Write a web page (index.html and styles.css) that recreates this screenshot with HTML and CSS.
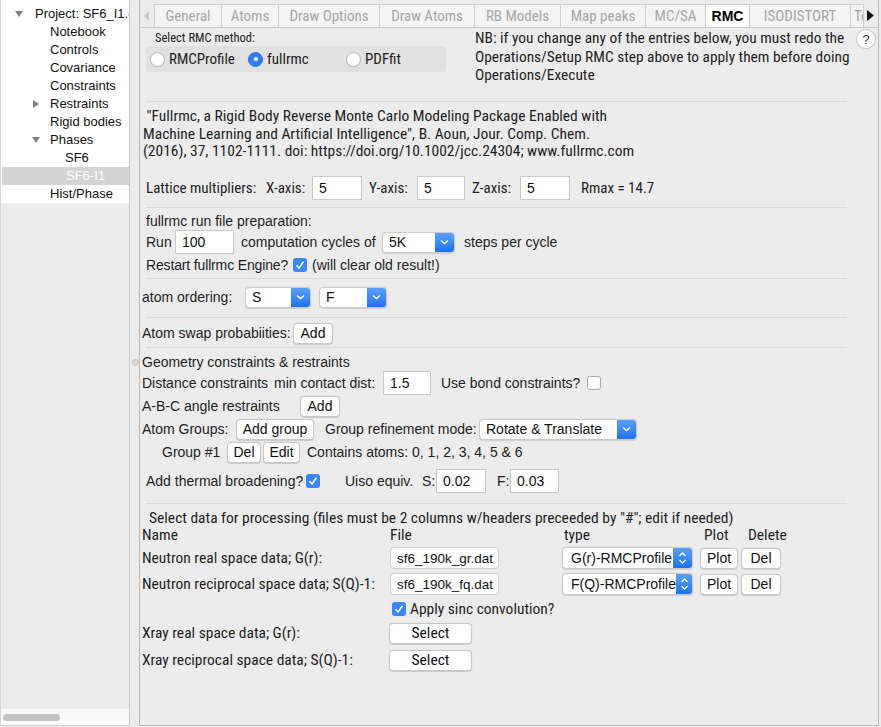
FILE: index.html
```html
<!DOCTYPE html>
<html>
<head>
<meta charset="utf-8">
<link rel="stylesheet" href="styles.css">
</head>
<body>
<div class="app">
  <div class="tree">
    <div class="rows">
      <div class="trow lvl0"><svg class="tri" width="10" height="10" viewBox="0 0 10 10"><path d="M1 2 H9 L5 8 Z" fill="#808080"/></svg>Project: SF6_I1.gpx</div>
      <div class="trow lvl1">Notebook</div>
      <div class="trow lvl1">Controls</div>
      <div class="trow lvl1">Covariance</div>
      <div class="trow lvl1">Constraints</div>
      <div class="trow lvl1b"><svg class="tri" width="10" height="10" viewBox="0 0 10 10"><path d="M2 1 V9 L8 5 Z" fill="#808080"/></svg>Restraints</div>
      <div class="trow lvl1">Rigid bodies</div>
      <div class="trow lvl1b"><svg class="tri" width="10" height="10" viewBox="0 0 10 10"><path d="M1 2 H9 L5 8 Z" fill="#808080"/></svg>Phases</div>
      <div class="trow lvl2">SF6</div>
      <div class="trow lvl2 sel">SF6-I1</div>
      <div class="trow lvl1">Hist/Phase</div>
    </div>
    <div class="filler"></div>
    <div class="hscroll"><div class="pill"></div></div>
  </div>

  <div class="main">
    <div class="tabbar">
      <div class="tabarrow left"><svg width="6" height="10" viewBox="0 0 6 10"><path d="M5 0 V10 L0 5 Z" fill="#c4c4c4"/></svg></div>
      <div class="tab w67">General</div>
      <div class="tab w57">Atoms</div>
      <div class="tab w101">Draw Options</div>
      <div class="tab w95">Draw Atoms</div>
      <div class="tab w86">RB Models</div>
      <div class="tab w85">Map peaks</div>
      <div class="tab w60">MC/SA</div>
      <div class="tab w44 active">RMC</div>
      <div class="tab w101">ISODISTORT</div>
      <div class="tab w14 part">Texture</div>
      <div class="tabarrow right"><svg width="7" height="11" viewBox="0 0 7 11"><path d="M0 0 V11 L7 5.5 Z" fill="#111"/></svg></div>
    </div>

    <div class="content">
      <div class="top">
        <div class="method">
          <div class="mlabel">Select RMC method:</div>
          <div class="radiobox">
            <div class="ritem r1"><span class="radio"></span>RMCProfile</div>
            <div class="ritem r2"><span class="radio on"></span>fullrmc</div>
            <div class="ritem"><span class="radio"></span>PDFfit</div>
          </div>
        </div>
        <div class="nb">NB: if you change any of the entries below, you must redo the<br>Operations/Setup RMC step above to apply them before doing<br>Operations/Execute</div>
        <div class="help">?</div>
      </div>

      <div class="sep s1"></div>

      <div class="cite narrow">&nbsp;"Fullrmc, a Rigid Body Reverse Monte Carlo Modeling Package Enabled with<br>Machine Learning and Artificial Intelligence", B. Aoun, Jour. Comp. Chem.<br>(2016), 37, 1102-1111. doi: https://doi.org/10.1002/jcc.24304; www.fullrmc.com</div>

      <div class="row lattice narrow">
        <span class="l-lat">Lattice multipliers:</span>
        <span class="l-x">X-axis:</span><span class="inp w50">5</span>
        <span class="l-y">Y-axis:</span><span class="inp w48">5</span>
        <span class="l-y">Z-axis:</span><span class="inp w50">5</span>
        <span class="rmax">Rmax = 14.7</span>
      </div>

      <div class="sep s2"></div>

      <div class="row prep ind">fullrmc run file preparation:</div>
      <div class="row run ind">
        <span class="l-run">Run</span><span class="inp w59">100</span>
        <span class="l-cyc">computation cycles of</span>
        <span class="popup w73"><span class="pv">5K</span><span class="pa"><svg width="9" height="6" viewBox="0 0 9 6"><path d="M1 1.5 L4.5 4.5 L8 1.5" stroke="#fff" stroke-width="1.4" fill="none"/></svg></span></span>
        <span class="l-steps">steps per cycle</span>
      </div>
      <div class="row restart ind">
        <span class="l-restart">Restart fullrmc Engine?</span>
        <span class="check on"><svg width="14" height="14" viewBox="0 0 14 14"><path d="M3.5 7.2 L6 10 L10.5 3.8" stroke="#fff" stroke-width="1.6" fill="none"/></svg></span>
        <span class="l-after">(will clear old result!)</span>
      </div>

      <div class="sep s3"></div>

      <div class="row order">
        <span class="l-order">atom ordering:</span>
        <span class="popup w66"><span class="pv">S</span><span class="pa"><svg width="9" height="6" viewBox="0 0 9 6"><path d="M1 1.5 L4.5 4.5 L8 1.5" stroke="#fff" stroke-width="1.4" fill="none"/></svg></span></span>
        <span class="popup w68 ml8"><span class="pv">F</span><span class="pa"><svg width="9" height="6" viewBox="0 0 9 6"><path d="M1 1.5 L4.5 4.5 L8 1.5" stroke="#fff" stroke-width="1.4" fill="none"/></svg></span></span>
      </div>

      <div class="sep s4"></div>

      <div class="row swap">
        <span class="l-swap">Atom swap probabiities:</span>
        <span class="btn w40">Add</span>
      </div>

      <div class="sep s5"></div>

      <div class="geo">
        <span class="splitdot"></span>
        <div class="row geohead">Geometry constraints &amp; restraints</div>
        <div class="row dist">
          <span class="l-dist">Distance constraints</span>
          <span class="l-min">min contact dist:</span><span class="inp w48">1.5</span>
          <span class="l-bond">Use bond constraints?</span>
          <span class="check"></span>
        </div>
        <div class="row abc">
          <span class="l-abc">A-B-C angle restraints</span>
          <span class="btn w40">Add</span>
        </div>
        <div class="row groups">
          <span class="l-groups">Atom Groups:</span>
          <span class="btn w78">Add group</span>
          <span class="l-mode">Group refinement mode:</span>
          <span class="popup w158"><span class="pv">Rotate &amp; Translate</span><span class="pa"><svg width="9" height="6" viewBox="0 0 9 6"><path d="M1 1.5 L4.5 4.5 L8 1.5" stroke="#fff" stroke-width="1.4" fill="none"/></svg></span></span>
        </div>
        <div class="row grp1">
          <span class="l-grp1">Group #1</span>
          <span class="btn w34">Del</span>
          <span class="btn w37 ml2">Edit</span>
          <span class="l-contains">Contains atoms: 0, 1, 2, 3, 4, 5 &amp; 6</span>
        </div>
        <div class="row thermal ind">
          <span class="l-thermal">Add thermal broadening?</span>
          <span class="check on"><svg width="14" height="14" viewBox="0 0 14 14"><path d="M3.5 7.2 L6 10 L10.5 3.8" stroke="#fff" stroke-width="1.6" fill="none"/></svg></span>
          <span class="l-uiso">Uiso equiv.</span>
          <span class="l-s">S:</span><span class="inp w50">0.02</span>
          <span class="l-f">F:</span><span class="inp w49">0.03</span>
        </div>
      </div>

      <div class="sep s6"></div>

      <div class="data narrow">
        <div class="dtitle">Select data for processing (files must be 2 columns w/headers preceeded by "#"; edit if needed)</div>
        <div class="grid">
          <div class="hd">Name</div><div class="hd">File</div><div class="hd h-type">type</div><div class="hd h-plot">Plot</div><div class="hd h-del">Delete</div>

          <div class="dl">Neutron real space data; G(r):</div>
          <div class="dc"><span class="fbox">sf6_190k_gr.dat</span></div>
          <div class="dc"><span class="updown"><span class="pv">G(r)-RMCProfile</span><span class="pa"><svg width="9" height="14" viewBox="0 0 9 14"><path d="M1.5 5 L4.5 2 L7.5 5 M1.5 9 L4.5 12 L7.5 9" stroke="#fff" stroke-width="1.3" fill="none"/></svg></span></span></div>
          <div class="dc"><span class="btn w38">Plot</span></div>
          <div class="dc"><span class="btn w40">Del</span></div>

          <div class="dl">Neutron reciprocal space data; S(Q)-1:</div>
          <div class="dc"><span class="fbox">sf6_190k_fq.dat</span></div>
          <div class="dc"><span class="updown"><span class="pv">F(Q)-RMCProfile</span><span class="pa"><svg width="9" height="14" viewBox="0 0 9 14"><path d="M1.5 5 L4.5 2 L7.5 5 M1.5 9 L4.5 12 L7.5 9" stroke="#fff" stroke-width="1.3" fill="none"/></svg></span></span></div>
          <div class="dc"><span class="btn w38">Plot</span></div>
          <div class="dc"><span class="btn w40">Del</span></div>
        </div>
        <div class="sinc">
          <span class="check on"><svg width="14" height="14" viewBox="0 0 14 14"><path d="M3.5 7.2 L6 10 L10.5 3.8" stroke="#fff" stroke-width="1.6" fill="none"/></svg></span>
          <span>Apply sinc convolution?</span>
        </div>
        <div class="xrow x1"><span class="dl2">Xray real space data; G(r):</span><span class="btn w83 nbtn">Select</span></div>
        <div class="xrow x2"><span class="dl2">Xray reciprocal space data; S(Q)-1:</span><span class="btn w83 nbtn">Select</span></div>
      </div>
    </div>
  </div>
</div>
</body>
</html>
```

FILE: styles.css
```css
* { box-sizing: border-box; }
body {
  margin: 0;
  background: #ececec;
  font-family: "Liberation Sans", Arial, sans-serif;
  font-size: 14px;
  color: #1e1e1e;
  width: 881px;
  height: 727px;
  overflow: hidden;
}
.narrow { font-family: "Roboto Condensed", "DejaVu Sans Condensed", sans-serif; font-size: 15.5px; }
.app { display: flex; height: 727px; }

/* tree */
.tree {
  width: 130px;
  height: 726px;
  border-left: 1px solid #d6d6d6;
  border-right: 1px solid #c8c8c8;
  border-bottom: 1px solid #d0d0d0;
  display: flex;
  flex-direction: column;
  font-size: 13px;
  color: #111;
}
.rows { background: #fff; padding-top: 5px; }
.trow { height: 18px; line-height: 18px; white-space: nowrap; overflow: hidden; display: flex; align-items: center; }
.tri { flex: none; margin-right: 9px; }
.lvl0 { padding-left: 13px; }
.lvl0 .tri { margin-right: 11px; }
.lvl1 { padding-left: 49px; }
.lvl1b { padding-left: 30px; }
.lvl2 { padding-left: 64px; }
.trow.sel { background: #d4d4d4; color: #fff; margin-left: 1px; }
.filler { flex: 1; background: #ececec; }
.hscroll { height: 16px; background: #fafafa; padding: 5px 0 0 2px; }
.pill { width: 57px; height: 7px; border-radius: 4px; background: #c2c2c2; }

/* main */
.main {
  margin-left: 9px;
  width: 740px;
  height: 726px;
  border-left: 1px solid #b9b9b9;
  border-right: 1px solid #b9b9b9;
  border-bottom: 1px solid #b9b9b9;
  display: flex;
  flex-direction: column;
}
.tabbar {
  height: 28px;
  padding-top: 4px;
  display: flex;
  border-bottom: 1px solid #c9c9c9;
}
.tabarrow { display: flex; align-items: center; justify-content: center; height: 23px; }
.tabarrow.left { width: 14px; }
.tabarrow.right { width: 13px; }
.tab {
  height: 23px;
  border: 1px solid #cfcfcf;
  border-bottom: none;
  border-right: none;
  background: #f4f4f4;
  color: #a6a6a6;
  font-family: "Roboto Condensed", "DejaVu Sans Condensed", sans-serif;
  font-size: 15px;
  display: flex;
  align-items: center;
  justify-content: center;
  white-space: nowrap;
  overflow: hidden;
}
.tab.part { justify-content: flex-start; padding-left: 3px; border-right: 1px solid #cfcfcf; }
.tab.active { background: #fff; color: #000; font-family: "Liberation Sans", Arial, sans-serif; font-weight: bold; font-size: 14px; }
.w14 { width: 14px; } .w44 { width: 44px; } .w57 { width: 57px; } .w60 { width: 60px; }
.w67 { width: 67px; } .w85 { width: 85px; } .w86 { width: 86px; } .w95 { width: 95px; } .w101 { width: 101px; }

.content { padding: 0 1px 0 2px; flex: 1; }
.top { height: 68px; display: flex; }
.method { margin-left: 4px; padding-top: 3px; width: 329px; }
.mlabel { font-family: "Roboto Condensed", sans-serif; font-size: 12.5px; line-height: 13px; height: 14px; padding-left: 9px; color: #222; }
.radiobox {
  margin-top: 1px;
  width: 300px; height: 26px;
  background: #e1e1e1;
  border-radius: 4px;
  display: flex; align-items: center;
  padding-left: 4px;
  font-family: "Roboto Condensed", sans-serif;
  font-size: 15px;
}
.ritem { display: flex; align-items: center; }
.ritem.r1, .ritem.r2 { width: 98px; }
.radio {
  width: 15px; height: 15px; border-radius: 50%;
  background: #fff; border: 1px solid #b3b3b3;
  margin-right: 4px; flex: none; position: relative;
}
.radio.on { background: #2f7ff6; border-color: #2a73e0; }
.radio.on::after { content: ""; position: absolute; left: 4.5px; top: 4.5px; width: 4px; height: 4px; border-radius: 50%; background: #fff; }
.nb {
  font-family: "Roboto Condensed", sans-serif;
  font-size: 15.4px; line-height: 18.5px;
  padding-top: 1px;
  width: 378px;
  white-space: nowrap;
}
.help {
  margin-top: 1px; margin-left: auto; margin-right: 1px;
  width: 20px; height: 20px; border-radius: 50%;
  background: #fff; border: 1px solid #c3c3c3;
  display: flex; align-items: center; justify-content: center;
  font-size: 13px; color: #333;
}

.sep { height: 1px; background: #dadada; width: 701px; margin-left: 4px; }
.s1 { margin-top: 5px; }
.cite { margin-top: 6px; height: 52px; font-size: 15.5px; line-height: 17.5px; padding-left: 1px; white-space: nowrap; }
.row { display: flex; align-items: center; white-space: nowrap; }
.ind { padding-left: 4px; }
.lattice { margin-top: 16px; height: 24px; padding-left: 4px; font-size: 15px; }
.l-lat { width: 120px; }
.l-x { width: 46px; }
.l-y { width: 48px; margin-left: 7px; }
.rmax { margin-left: 11px; }
.inp {
  background: #fff; border: 1px solid #c9c9c9;
  height: 24px; display: flex; align-items: center;
  padding-left: 6px;
  font-family: "Liberation Sans", Arial, sans-serif; font-size: 14px; color: #111;
}
.w48 { width: 48px; } .w49 { width: 49px; } .w50 { width: 50px; } .w59 { width: 59px; }
.s2 { margin-top: 7px; }
.prep { margin-top: 4px; height: 18px; }
.run { height: 24px; }
.l-run { width: 29px; }
.l-cyc { margin-left: 7px; width: 141px; }
.popup {
  display: inline-flex; height: 21px;
  background: #fff; border: 1px solid #cacaca; border-radius: 4px;
  box-shadow: 0 0.5px 1px rgba(0,0,0,0.12);
  overflow: hidden; flex: none;
}
.popup .pv { flex: 1; display: flex; align-items: center; padding-left: 6px; font-size: 14px; color: #111; }
.popup .pa, .updown .pa {
  width: 19px; background: linear-gradient(#5aa0fb, #1f72f2);
  display: flex; align-items: center; justify-content: center;
}
.w73 { width: 73px; } .w66 { width: 66px; } .w68 { width: 68px; } .w158 { width: 158px; }
.ml8 { margin-left: 8px; } .ml2 { margin-left: 2px; }
.l-steps { margin-left: 9px; }
.restart { margin-top: 1px; height: 20px; }
.l-restart { width: 147px; letter-spacing: -0.15px; }
.check {
  width: 14px; height: 14px; border-radius: 3px;
  background: #fff; border: 1px solid #a9a9a9; flex: none; display: inline-flex;
}
.check.on { background: #3a86f7; border: none; }
.l-after { margin-left: 5px; }
.s3 { margin-top: 3px; }
.order { margin-top: 7px; height: 22px; }
.l-order { width: 103px; }
.s4 { margin-top: 9px; }
.swap { margin-top: 4px; height: 22px; }
.l-swap { width: 151px; }
.btn {
  display: inline-flex; align-items: center; justify-content: center;
  height: 21px; background: #fff;
  border: 1px solid #c8c8c8; border-radius: 4px;
  box-shadow: 0 0.5px 1px rgba(0,0,0,0.15);
  font-size: 14px; color: #111; flex: none;
  font-family: "Liberation Sans", Arial, sans-serif;
}
.btn.nbtn { font-family: "Roboto Condensed", sans-serif; font-size: 15.5px; }
.w34 { width: 34px; } .w37 { width: 37px; } .w38 { width: 38px; } .w40 { width: 40px; } .w78 { width: 78px; } .w83 { width: 83px; }
.s5 { margin-top: 3px; }
.geo { position: relative; }
.splitdot { position: absolute; left: -10px; top: 6px; width: 7px; height: 7px; border-radius: 50%; background: #d6d6d6; border: 1px solid #c4c4c4; }
.geohead { margin-top: 5px; height: 18px; }
.dist { height: 24px; }
.l-dist { width: 132px; }
.l-min { width: 109px; }
.l-bond { margin-left: 10px; width: 146px; }
.abc { height: 22px; }
.l-abc { width: 158px; }
.groups { height: 24px; }
.l-groups { width: 94px; }
.l-mode { margin-left: 11px; width: 154px; }
.grp1 { height: 22px; padding-left: 20px; }
.l-grp1 { width: 65px; }
.l-contains { margin-left: 7px; }
.thermal { margin-top: 6px; height: 24px; }
.l-thermal { width: 160px; }
.l-uiso { margin-left: 25px; width: 77px; }
.l-s { width: 14px; }
.l-f { margin-left: 11px; width: 13px; }
.s6 { margin-top: 10px; }

.dtitle { margin-top: 5px; height: 18px; line-height: 18px; padding-left: 7px; white-space: nowrap; }
.grid {
  display: grid;
  grid-template-columns: 248px 172px 138px 41px 50px;
  grid-template-rows: 16px 27px 26px;
}
.grid > div { display: flex; align-items: center; white-space: nowrap; }
.grid .dl, .grid .dc { height: 24px; align-self: end; }
.h-type { padding-left: 2px; }
.h-plot { padding-left: 4px; }
.h-del { padding-left: 7px; }
.fbox {
  width: 109px; height: 22px; background: #fff;
  border: 1px solid #d0d0d0; border-radius: 4px;
  display: flex; align-items: center; padding-left: 6px;
  font-family: "Liberation Sans", Arial, sans-serif; font-size: 13.5px; color: #111;
}
.updown {
  display: inline-flex; width: 131px; height: 22px;
  background: #fff; border: 1px solid #cacaca; border-radius: 4px;
  box-shadow: 0 0.5px 1px rgba(0,0,0,0.12); overflow: hidden;
}
.updown .pv { flex: 1; display: flex; align-items: center; padding-left: 8px; font-family: "Liberation Sans", Arial, sans-serif; font-size: 14px; color: #111; }
.sinc { margin-top: 3px; height: 20px; padding-left: 250px; display: flex; align-items: center; gap: 4px; }
.xrow { display: flex; align-items: center; height: 22px; }
.x1 { margin-top: 3px; }
.x2 { margin-top: 5px; }
.dl2 { width: 247px; }
```
